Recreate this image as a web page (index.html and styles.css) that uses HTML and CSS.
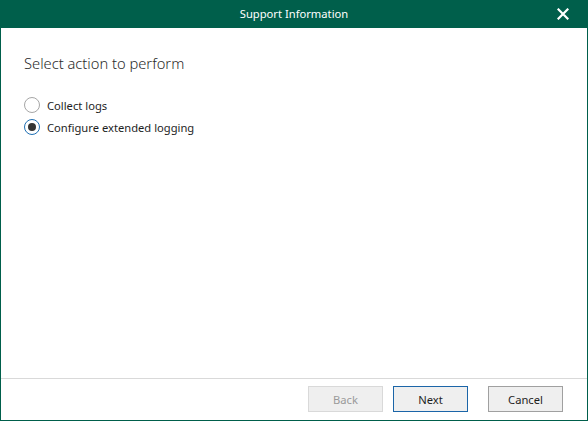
FILE: index.html
```html
<!DOCTYPE html>
<html>
<head>
<meta charset="utf-8">
<link rel="stylesheet" href="styles.css">
</head>
<body>
<div class="window">
  <div class="titlebar">
    <span class="title">Support Information</span>
    <span class="close" aria-label="Close">
      <svg width="12" height="12" viewBox="0 0 12 12"><path d="M1.5 1.5 L10.5 10.5 M10.5 1.5 L1.5 10.5" stroke="#fff" stroke-width="2.2" stroke-linecap="square"/></svg>
    </span>
  </div>
  <div class="content">
    <div class="heading">Select action to perform</div>
    <div class="options">
      <label class="option"><span class="radio"></span><span>Collect logs</span></label>
      <label class="option"><span class="radio checked"></span><span>Configure extended logging</span></label>
    </div>
  </div>
  <div class="footer">
    <button class="btn disabled">Back</button>
    <button class="btn default">Next</button>
    <button class="btn cancel">Cancel</button>
  </div>
</div>
</body>
</html>
```
FILE: styles.css
```css
html, body {
  margin: 0;
  padding: 0;
}
body {
  width: 588px;
  height: 421px;
  font-family: "Noto Sans", "Open Sans", sans-serif;
  background: #fff;
  overflow: hidden;
}
.window {
  width: 588px;
  height: 421px;
  box-sizing: border-box;
  border: 1px solid #005f4b;
  border-top: none;
  display: flex;
  flex-direction: column;
}
.titlebar {
  height: 28px;
  margin: 0 -1px;
  background: #005f4b;
  color: #fff;
  display: flex;
  align-items: center;
  justify-content: center;
  position: relative;
  font-size: 11.2px;
}
.title {
  line-height: 28px;
}
.close {
  position: absolute;
  right: 19px;
  top: 8px;
  width: 12px;
  height: 12px;
  display: flex;
}
.content {
  flex: 1;
  padding: 0 23px;
}
.heading {
  margin-top: 25px;
  font-size: 14.7px;
  font-weight: 300;
  color: #2a2a2a;
  line-height: 20px;
}
.options {
  margin-top: 24px;
  display: flex;
  flex-direction: column;
  gap: 6px;
}
.option {
  display: flex;
  align-items: center;
  gap: 7px;
  font-size: 11.2px;
  color: #1e1e1e;
  height: 16px;
}
.radio {
  width: 16px;
  height: 16px;
  box-sizing: border-box;
  border: 1px solid #a6a6a6;
  border-radius: 50%;
  display: flex;
  align-items: center;
  justify-content: center;
  background: #fff;
}
.radio.checked {
  border-color: #1f6fb3;
}
.radio.checked::after {
  content: "";
  width: 8px;
  height: 8px;
  border-radius: 50%;
  background: #333;
}
.footer {
  height: 42px;
  border-top: 1px solid #d9d9d9;
  display: flex;
  justify-content: flex-end;
  align-items: flex-start;
  padding: 7px 24px 0 0;
  gap: 10px;
  box-sizing: border-box;
}
.btn {
  width: 75px;
  height: 26px;
  box-sizing: border-box;
  font-family: "Noto Sans", "Open Sans", sans-serif;
  font-size: 11.2px;
  background: #efefef;
  border: 1px solid #a0a0a0;
  color: #1e1e1e;
  padding: 0;
}
.btn.disabled {
  border-color: #d9d9d9;
  color: #9a9a9a;
}
.btn.default {
  border-color: #1b65a8;
}
.btn.cancel {
  margin-left: 10px;
}
```
